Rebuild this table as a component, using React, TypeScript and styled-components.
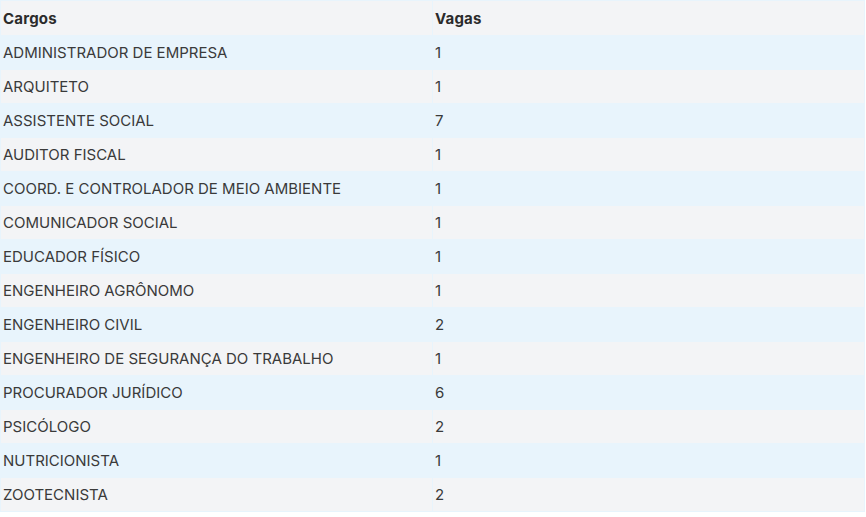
import React from "react";
import styled, { createGlobalStyle } from "styled-components";

const GlobalStyle = createGlobalStyle`
  body {
    margin: 0;
    background: #ffffff;
    font-family: Inter, "Open Sans", "Liberation Sans", sans-serif;
  }
`;

const vagas: [string, number][] = [
  ["ADMINISTRADOR DE EMPRESA", 1],
  ["ARQUITETO", 1],
  ["ASSISTENTE SOCIAL", 7],
  ["AUDITOR FISCAL", 1],
  ["COORD. E CONTROLADOR DE MEIO AMBIENTE", 1],
  ["COMUNICADOR SOCIAL", 1],
  ["EDUCADOR FÍSICO", 1],
  ["ENGENHEIRO AGRÔNOMO", 1],
  ["ENGENHEIRO CIVIL", 2],
  ["ENGENHEIRO DE SEGURANÇA DO TRABALHO", 1],
  ["PROCURADOR JURÍDICO", 6],
  ["PSICÓLOGO", 2],
  ["NUTRICIONISTA", 1],
  ["ZOOTECNISTA", 2],
];

function App() {
  return (
    <>
      <GlobalStyle />
      <Table>
        <thead>
          <tr>
            <HeadCell>Cargos</HeadCell>
            <HeadCell>Vagas</HeadCell>
          </tr>
        </thead>
        <tbody>
          {vagas.map(([cargo, qtd], i) => (
            <Row key={cargo} $odd={i % 2 === 0}>
              <Cell>{cargo}</Cell>
              <Cell>{qtd}</Cell>
            </Row>
          ))}
        </tbody>
      </Table>
    </>
  );
}

const Table = styled.table`
  width: 865px;
  border-collapse: separate;
  border-spacing: 1px;
  background: #e8f4fc;
  color: #3a3a3a;
  font-size: 15px;
  table-layout: fixed;
`;

const HeadCell = styled.th`
  height: 34px;
  padding: 1px 2px 0;
  box-sizing: border-box;
  text-align: left;
  font-weight: 700;
  letter-spacing: 0.2px;
  background: #f3f4f6;
  color: #2b2b2b;
`;

const Row = styled.tr<{ $odd: boolean }>`
  background: ${({ $odd }) => ($odd ? "#e8f4fc" : "#f3f4f6")};
`;

const Cell = styled.td`
  height: 33px;
  padding: 0 2px;
  box-sizing: border-box;
`;

export default App;
